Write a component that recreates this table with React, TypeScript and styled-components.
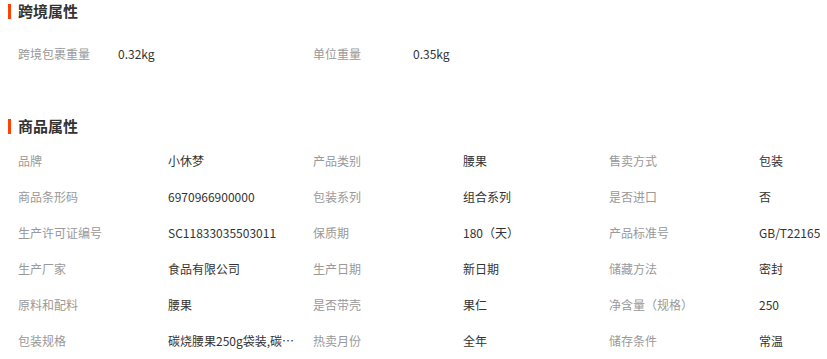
import React from 'react'
import styled, { createGlobalStyle } from 'styled-components'

const GlobalStyle = createGlobalStyle`
  body {
    margin: 0;
    background: #fff;
    font-family: "Microsoft YaHei", "Noto Sans CJK SC", "Noto Sans", sans-serif;
    font-size: 12px;
  }
`

const Page = styled.div`
  width: 827px;
  height: 359px;
  overflow: hidden;
`

const Section = styled.section<{ gapTop?: number }>`
  margin-top: ${({ gapTop }) => gapTop || 0}px;
`

const Title = styled.h3`
  display: flex;
  align-items: center;
  height: 22px;
  margin: 0;
  padding-left: 8px;
  font-size: 15px;
  font-weight: bold;
  color: #333;
  line-height: 22px;

  &::before {
    content: '';
    display: block;
    width: 3px;
    height: 15px;
    margin-right: 7px;
    background: #ff4200;
  }
`

const Grid = styled.div<{ padTop: number }>`
  display: grid;
  grid-template-columns: 295px 296px 1fr;
  padding: ${({ padTop }) => padTop}px 0 0 18px;
`

const Item = styled.div`
  display: flex;
  align-items: center;
  height: 36px;
  min-width: 0;
`

const Label = styled.span<{ w: number }>`
  flex: 0 0 ${({ w }) => w}px;
  color: #999;
  white-space: nowrap;
`

const Value = styled.span`
  max-width: 128px;
  color: #333;
  white-space: nowrap;
  overflow: hidden;
  text-overflow: ellipsis;
`

const crossBorder = [
  ['跨境包裹重量', '0.32kg'],
  ['单位重量', '0.35kg'],
]

const attrs = [
  ['品牌', '小休梦'],
  ['产品类别', '腰果'],
  ['售卖方式', '包装'],
  ['商品条形码', '6970966900000'],
  ['包装系列', '组合系列'],
  ['是否进口', '否'],
  ['生产许可证编号', 'SC11833035503011'],
  ['保质期', '180（天）'],
  ['产品标准号', 'GB/T22165'],
  ['生产厂家', '食品有限公司'],
  ['生产日期', '新日期'],
  ['储藏方法', '密封'],
  ['原料和配料', '腰果'],
  ['是否带壳', '果仁'],
  ['净含量（规格）', '250'],
  ['包装规格', '碳烧腰果250g袋装,碳烧腰果500g袋装'],
  ['热卖月份', '全年'],
  ['储存条件', '常温'],
]

export default function App() {
  return (
    <Page>
      <GlobalStyle />
      <Section>
        <Title>跨境属性</Title>
        <Grid padTop={13}>
          {crossBorder.map(([k, v]) => (
            <Item key={k}>
              <Label w={100}>{k}</Label>
              <Value>{v}</Value>
            </Item>
          ))}
        </Grid>
      </Section>
      <Section gapTop={44}>
        <Title>商品属性</Title>
        <Grid padTop={5}>
          {attrs.map(([k, v]) => (
            <Item key={k}>
              <Label w={150}>{k}</Label>
              <Value title={v}>{v}</Value>
            </Item>
          ))}
        </Grid>
      </Section>
    </Page>
  )
}
